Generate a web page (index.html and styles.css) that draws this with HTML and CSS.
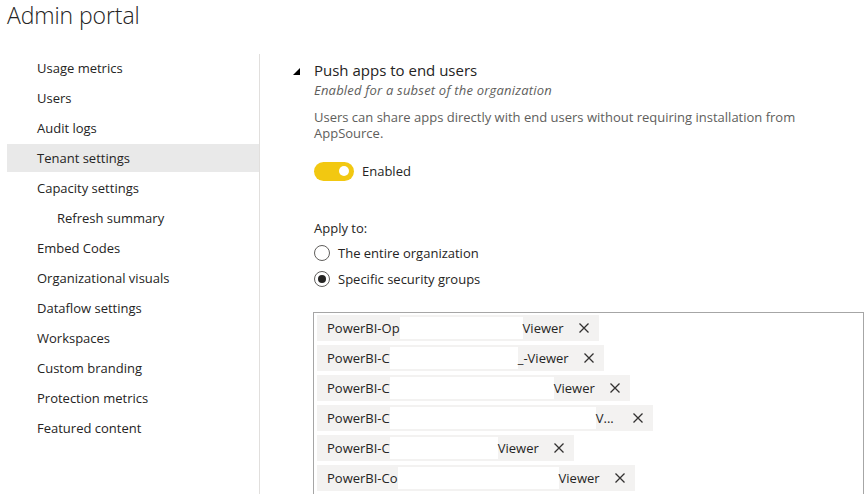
FILE: index.html
```html
<!DOCTYPE html>
<html lang="en">
<head>
<meta charset="utf-8">
<title>Admin portal</title>
<link rel="stylesheet" href="styles.css">
</head>
<body>
<div class="page">
  <header class="header">
    <h1 class="title">Admin portal</h1>
  </header>
  <div class="body">
    <nav class="sidebar">
      <ul class="nav">
        <li class="nav-item">Usage metrics</li>
        <li class="nav-item">Users</li>
        <li class="nav-item">Audit logs</li>
        <li class="nav-item active">Tenant settings</li>
        <li class="nav-item">Capacity settings</li>
        <li class="nav-item sub">Refresh summary</li>
        <li class="nav-item">Embed Codes</li>
        <li class="nav-item">Organizational visuals</li>
        <li class="nav-item">Dataflow settings</li>
        <li class="nav-item">Workspaces</li>
        <li class="nav-item">Custom branding</li>
        <li class="nav-item">Protection metrics</li>
        <li class="nav-item">Featured content</li>
      </ul>
    </nav>
    <main class="main">
      <div class="setting">
        <div class="caret">
          <svg width="8" height="8" viewBox="0 0 8 8"><polygon points="7,0 7,7 0,7" fill="#000"/></svg>
        </div>
        <div class="setting-body">
          <h2 class="setting-title">Push apps to end users</h2>
          <p class="setting-status">Enabled for a subset of the organization</p>
          <p class="setting-desc">Users can share apps directly with end users without requiring installation from AppSource.</p>
          <div class="toggle-row">
            <span class="toggle"><span class="knob"></span></span>
            <span class="toggle-label">Enabled</span>
          </div>
          <div class="apply">
            <div class="apply-label">Apply to:</div>
            <label class="radio-row first"><span class="radio"></span>The entire organization</label>
            <label class="radio-row"><span class="radio checked"></span>Specific security groups</label>
          </div>
          <div class="groups">
            <div class="tag"><span class="tag-text">PowerBI-Op<span class="redact" style="width:123px"></span>Viewer</span><svg class="x" viewBox="0 0 10 10"><path d="M0.5 0.5 L9.5 9.5 M9.5 0.5 L0.5 9.5"/></svg></div>
            <div class="tag"><span class="tag-text">PowerBI-C<span class="redact" style="width:128px"></span>_-Viewer</span><svg class="x" viewBox="0 0 10 10"><path d="M0.5 0.5 L9.5 9.5 M9.5 0.5 L0.5 9.5"/></svg></div>
            <div class="tag"><span class="tag-text">PowerBI-C<span class="redact" style="width:164px"></span>Viewer</span><svg class="x" viewBox="0 0 10 10"><path d="M0.5 0.5 L9.5 9.5 M9.5 0.5 L0.5 9.5"/></svg></div>
            <div class="tag"><span class="tag-text">PowerBI-C<span class="redact" style="width:206px"></span>V...</span><svg class="x wide" viewBox="0 0 10 10"><path d="M0.5 0.5 L9.5 9.5 M9.5 0.5 L0.5 9.5"/></svg></div>
            <div class="tag"><span class="tag-text">PowerBI-C<span class="redact" style="width:108px"></span>Viewer</span><svg class="x" viewBox="0 0 10 10"><path d="M0.5 0.5 L9.5 9.5 M9.5 0.5 L0.5 9.5"/></svg></div>
            <div class="tag"><span class="tag-text">PowerBI-Co<span class="redact" style="width:161px"></span>Viewer</span><svg class="x" viewBox="0 0 10 10"><path d="M0.5 0.5 L9.5 9.5 M9.5 0.5 L0.5 9.5"/></svg></div>
          </div>
        </div>
      </div>
    </main>
  </div>
</div>
</body>
</html>
```
FILE: styles.css
```css
* { box-sizing: border-box; }
html, body { margin: 0; padding: 0; background: #fff; }
body {
  font-family: "Open Sans", "Noto Sans", sans-serif;
  font-size: 13px;
  color: #252423;
  overflow: hidden;
}
.page { width: 865px; height: 494px; overflow: hidden; }
.header { height: 54px; padding-left: 7px; }
.title {
  margin: 0;
  font-weight: 300;
  font-size: 23px;
  line-height: 30px;
  letter-spacing: -0.1px;
  color: #252423;
}
.body { display: flex; height: 440px; }
.sidebar {
  width: 260px;
  padding-left: 7px;
  border-right: 1px solid #e1dfdd;
  flex: none;
}
.nav { list-style: none; margin: 0; padding: 0; }
.nav-item {
  height: 28px;
  line-height: 28px;
  margin-bottom: 2px;
  padding-left: 30px;
  white-space: nowrap;
}
.nav-item.sub { padding-left: 50px; }
.nav-item.active { background: #e9e9e9; }
.main { flex: 1; padding-left: 33px; padding-top: 5px; }
.setting { display: flex; }
.caret { width: 21px; padding-top: 9px; flex: none; }
.caret svg { display: block; }
.setting-body { flex: 1; }
.setting-title {
  margin: 0;
  font-size: 15px;
  font-weight: 400;
  line-height: 22px;
  color: #252423;
}
.setting-status {
  margin: 0;
  font-style: italic;
  font-size: 13px;
  line-height: 18px;
  letter-spacing: 0.2px;
  color: #605e5c;
}
.setting-desc {
  margin: 10px 0 0;
  width: 500px;
  line-height: 16px;
  color: #605e5c;
}
.toggle-row { display: flex; align-items: center; margin-top: 20px; height: 20px; }
.toggle {
  width: 40px;
  height: 19px;
  border-radius: 10px;
  background: #f2c811;
  display: flex;
  align-items: center;
  justify-content: flex-end;
  padding-right: 5px;
}
.knob { width: 10px; height: 10px; border-radius: 50%; background: #fff; }
.toggle-label { margin-left: 8px; }
.apply { margin-top: 38px; }
.apply-label { line-height: 18px; }
.radio-row { display: flex; align-items: center; height: 26px; }
.radio-row.first { margin-top: 3px; }
.radio {
  width: 16px;
  height: 16px;
  border-radius: 50%;
  border: 1px solid #605e5c;
  margin-right: 8px;
  display: flex;
  align-items: center;
  justify-content: center;
}
.radio.checked::after {
  content: "";
  width: 8px;
  height: 8px;
  border-radius: 50%;
  background: #252423;
}
.groups {
  margin-top: 20px;
  margin-left: -1px;
  width: 551px;
  height: 200px;
  border: 1px solid #a6a6a6;
  padding: 2px 3px;
  display: flex;
  flex-direction: column;
  align-items: flex-start;
  gap: 4px;
}
.tag {
  height: 26px;
  background: #f3f2f1;
  display: flex;
  align-items: center;
  padding: 0 10px;
  white-space: nowrap;
}
.tag-text { display: flex; align-items: center; }
.redact { display: inline-block; height: 22px; background: #fff; }
.x { width: 10px; height: 10px; margin-left: 15px; fill: none; stroke: #323130; stroke-width: 1.3; }
.x.wide { margin-left: 19px; }
```
